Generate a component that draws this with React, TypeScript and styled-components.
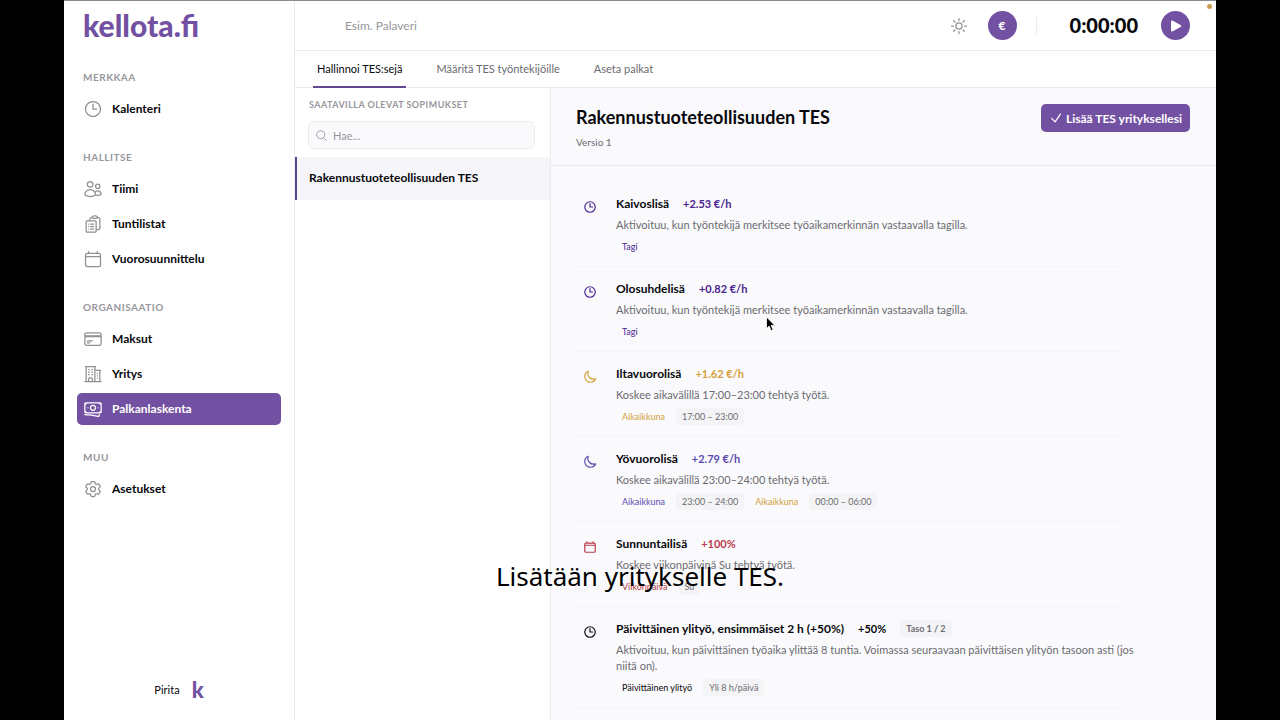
import React from 'react';
import styled, { createGlobalStyle } from 'styled-components';
import type { IconType } from 'react-icons';
import {
  HiOutlineBanknotes,
  HiOutlineBuildingOffice2,
  HiOutlineCalendar,
  HiOutlineCheck,
  HiOutlineClipboardDocumentList,
  HiOutlineClock,
  HiOutlineCog6Tooth,
  HiOutlineCreditCard,
  HiOutlineMagnifyingGlass,
  HiOutlineMoon,
  HiOutlineSun,
  HiOutlineUsers,
  HiPlay,
} from 'react-icons/hi2';

const color = {
  brand: '#7351a2',
  ink: '#08080c',
  muted: '#6b6b70',
  faint: '#97979c',
  line: '#ebebee',
  panel: '#fafafc',
  violet: '#4a2391',
  indigo: '#5a4ab0',
  amber: '#d5a03c',
  red: '#b83a4b',
};

const GlobalStyle = createGlobalStyle`
  *, *::before, *::after { box-sizing: border-box; }
  body { margin: 0; background: #000; }
  body, button, input { font-family: Lato, "Liberation Sans", sans-serif; }
  h1, h2, h3, p, ul { margin: 0; padding: 0; }
  ul { list-style: none; }
`;

const Stage = styled.div`
  position: relative;
  height: 100vh;
  padding: 0 5%;
  overflow: hidden;
`;

const Shell = styled.div`
  display: flex;
  height: 100%;
  background: #fff;
  border-top: 1px solid #8c8a8e;
  color: ${color.ink};
`;

const Sidebar = styled.aside`
  display: flex;
  flex-direction: column;
  flex: none;
  width: 231px;
  padding: 6px 13px 18px;
  border-right: 1px solid ${color.line};
`;

const Wordmark = styled.a`
  padding-left: 6px;
  margin-bottom: 26px;
  font-size: 30px;
  line-height: 36px;
  font-weight: 900;
  color: ${color.brand};
  text-decoration: none;
`;

const NavSection = styled.section`
  margin-bottom: 24px;
`;

const NavHeading = styled.h2`
  padding-left: 6px;
  margin-bottom: 8px;
  font-size: 10px;
  line-height: 16px;
  font-weight: 700;
  letter-spacing: 0.05em;
  text-transform: uppercase;
  color: ${color.faint};
`;

const NavList = styled.ul`
  display: grid;
  gap: 3px;
`;

const NavLink = styled.a<{ $active?: boolean }>`
  display: flex;
  align-items: center;
  gap: 9px;
  height: 32px;
  padding-left: 6px;
  border-radius: 5px;
  font-size: 12px;
  line-height: 16px;
  font-weight: 700;
  text-decoration: none;
  color: ${(p) => (p.$active ? '#fff' : color.ink)};
  background: ${(p) => (p.$active ? color.brand : 'transparent')};

  svg {
    width: 20px;
    height: 20px;
    color: ${(p) => (p.$active ? '#fff' : '#8f8f94')};
  }
`;

const Account = styled.footer`
  display: flex;
  align-items: center;
  justify-content: center;
  gap: 12px;
  margin-top: auto;
  font-size: 11px;
  line-height: 24px;
`;

const Monogram = styled.span`
  font-size: 22px;
  font-weight: 900;
  color: ${color.brand};
`;

const Main = styled.main`
  display: flex;
  flex-direction: column;
  flex: 1;
  min-width: 0;
`;

const TopBar = styled.header`
  display: flex;
  align-items: center;
  height: 50px;
  flex: none;
  padding: 0 26px 0 50px;
  border-bottom: 1px solid ${color.line};
`;

const TaskInput = styled.input`
  flex: 1;
  min-width: 0;
  padding: 0;
  border: 0;
  outline: 0;
  font-size: 12px;
  background: transparent;

  &::placeholder { color: ${color.faint}; opacity: 1; }
`;

const ThemeButton = styled.button`
  display: flex;
  padding: 0;
  margin-right: 19px;
  border: 0;
  background: none;
  color: #8f8f94;

  svg { width: 20px; height: 20px; }
`;

const RoundButton = styled.button`
  display: flex;
  align-items: center;
  justify-content: center;
  width: 29px;
  height: 29px;
  padding: 0;
  border: 0;
  border-radius: 50%;
  font-size: 12px;
  font-weight: 900;
  color: #fff;
  background: ${color.brand};

  svg { width: 16px; height: 16px; }
`;

const Divider = styled.span`
  width: 1px;
  height: 18px;
  margin: 0 33px 0 19px;
  background: ${color.line};
`;

const Timer = styled.time`
  margin-right: 23px;
  font-size: 20px;
  line-height: 26px;
  padding-bottom: 2px;
  font-weight: 900;
`;

const Tabs = styled.nav`
  display: flex;
  flex: none;
  gap: 26px;
  height: 37px;
  padding-left: 18px;
  border-bottom: 1px solid ${color.line};
`;

const Tab = styled.a<{ $active?: boolean }>`
  height: 37px;
  padding: 0 4px;
  border-bottom: 2px solid ${(p) => (p.$active ? '#62488f' : 'transparent')};
  font-size: 11px;
  line-height: 36px;
  text-decoration: none;
  color: ${(p) => (p.$active ? color.ink : color.muted)};
`;

const Columns = styled.div`
  display: flex;
  flex: 1;
  min-height: 0;
`;

const AgreementPane = styled.section`
  flex: none;
  width: 256px;
  padding-top: 9px;
  border-right: 1px solid ${color.line};
`;

const PaneHeading = styled.h2`
  padding-left: 14px;
  margin-bottom: 8px;
  font-size: 9px;
  line-height: 16px;
  font-weight: 700;
  letter-spacing: 0.05em;
  text-transform: uppercase;
  color: ${color.faint};
`;

const SearchField = styled.label`
  display: flex;
  align-items: center;
  gap: 5px;
  height: 28px;
  margin: 0 15px 8px 13px;
  padding: 0 6px;
  border: 1px solid ${color.line};
  border-radius: 6px;
  background: ${color.panel};

  svg { flex: none; width: 13px; height: 13px; color: #8f8f94; }
`;

const SearchInput = styled.input`
  flex: 1;
  min-width: 0;
  padding: 0;
  border: 0;
  outline: 0;
  font-size: 11px;
  background: transparent;

  &::placeholder { color: ${color.faint}; opacity: 1; }
`;

const AgreementButton = styled.button`
  display: block;
  width: 100%;
  height: 43px;
  padding: 0 0 3px 12px;
  border: 0;
  border-left: 2px solid #5b4788;
  text-align: left;
  font-size: 12px;
  font-weight: 700;
  color: ${color.ink};
  background: #f6f5fa;
`;

const Detail = styled.section`
  flex: 1;
  min-width: 0;
  background: ${color.panel};
`;

const DetailHeader = styled.header`
  display: flex;
  align-items: flex-start;
  justify-content: space-between;
  height: 78px;
  padding: 16px 26px 0 25px;
  border-bottom: 1px solid ${color.line};
`;

const DetailTitle = styled.h1`
  margin-bottom: 4px;
  font-size: 18px;
  line-height: 26px;
  font-weight: 700;
`;

const Version = styled.p`
  font-size: 10px;
  line-height: 16px;
  color: ${color.muted};
`;

const PrimaryButton = styled.button`
  display: flex;
  align-items: center;
  gap: 3px;
  height: 28px;
  padding: 0 8px;
  border: 0;
  border-radius: 5px;
  font-size: 12px;
  font-weight: 700;
  color: #fff;
  background: ${color.brand};

  svg { width: 14px; height: 14px; stroke-width: 2; }
`;

const RuleList = styled.ul`
  max-width: 570px;
  padding: 16px 0 0 25px;
`;

const Rule = styled.li`
  display: flex;
  gap: 19px;
  padding: 13px 0 11px 7px;
  border-bottom: 1px solid #f5f5f8;
`;

const RuleIcon = styled.span<{ $tone: string }>`
  flex: none;
  padding-top: 5px;
  color: ${(p) => p.$tone};

  svg { display: block; width: 14px; height: 14px; stroke-width: 2; }
`;

const RuleBody = styled.div`
  display: grid;
  gap: 5px;
  min-width: 0;
  margin-right: -20px;
`;

const RuleTop = styled.div`
  display: flex;
  align-items: center;
  gap: 14px;
  height: 17px;
`;

const RuleName = styled.h3`
  font-size: 12px;
  font-weight: 700;
`;

const Amount = styled.span<{ $tone: string }>`
  font-size: 11px;
  font-weight: 700;
  color: ${(p) => p.$tone};
`;

const RuleText = styled.p`
  font-size: 11px;
  line-height: 16px;
  color: ${color.muted};
`;

const Chips = styled.div`
  display: flex;
  gap: 5px;
`;

const Chip = styled.span<{ $tone?: string; $strong?: boolean }>`
  padding: 0 6px;
  border-radius: 4px;
  font-size: 9px;
  line-height: 17px;
  font-weight: ${(p) => (p.$strong ? 700 : 400)};
  color: ${(p) => p.$tone ?? color.muted};
  background: ${(p) => (p.$tone ? 'transparent' : '#f4f4f6')};
`;

const Caption = styled.p`
  position: absolute;
  left: 0;
  right: 0;
  bottom: 127px;
  text-align: center;
  font-family: "Noto Sans", sans-serif;
  font-size: 26px;
  line-height: 34px;
  color: #000;
`;

const Pointer = styled.svg`
  position: absolute;
  left: 765px;
  top: 316px;
  width: 11px;
  height: 16px;
`;

const RecordingDot = styled.span`
  position: absolute;
  top: 4px;
  right: calc(5% + 4px);
  width: 5px;
  height: 5px;
  border-radius: 50%;
  background: #c99f4c;
`;

type NavEntry = { label: string; icon: IconType; active?: boolean };

const navigation: { title: string; items: NavEntry[] }[] = [
  { title: 'Merkkaa', items: [{ label: 'Kalenteri', icon: HiOutlineClock }] },
  {
    title: 'Hallitse',
    items: [
      { label: 'Tiimi', icon: HiOutlineUsers },
      { label: 'Tuntilistat', icon: HiOutlineClipboardDocumentList },
      { label: 'Vuorosuunnittelu', icon: HiOutlineCalendar },
    ],
  },
  {
    title: 'Organisaatio',
    items: [
      { label: 'Maksut', icon: HiOutlineCreditCard },
      { label: 'Yritys', icon: HiOutlineBuildingOffice2 },
      { label: 'Palkanlaskenta', icon: HiOutlineBanknotes, active: true },
    ],
  },
  { title: 'Muu', items: [{ label: 'Asetukset', icon: HiOutlineCog6Tooth }] },
];

type ChipData = { label: string; tone?: string };

type RuleData = {
  name: string;
  amount: string;
  tone: string;
  icon: IconType;
  text: string;
  level?: string;
  chips: ChipData[];
};

const tagText = 'Aktivoituu, kun työntekijä merkitsee työaikamerkinnän vastaavalla tagilla.';

const rules: RuleData[] = [
  {
    name: 'Kaivoslisä',
    amount: '+2.53 €/h',
    tone: color.violet,
    icon: HiOutlineClock,
    text: tagText,
    chips: [{ label: 'Tagi', tone: color.violet }],
  },
  {
    name: 'Olosuhdelisä',
    amount: '+0.82 €/h',
    tone: color.violet,
    icon: HiOutlineClock,
    text: tagText,
    chips: [{ label: 'Tagi', tone: color.violet }],
  },
  {
    name: 'Iltavuorolisä',
    amount: '+1.62 €/h',
    tone: color.amber,
    icon: HiOutlineMoon,
    text: 'Koskee aikavälillä 17:00–23:00 tehtyä työtä.',
    chips: [{ label: 'Aikaikkuna', tone: color.amber }, { label: '17:00 – 23:00' }],
  },
  {
    name: 'Yövuorolisä',
    amount: '+2.79 €/h',
    tone: color.indigo,
    icon: HiOutlineMoon,
    text: 'Koskee aikavälillä 23:00–24:00 tehtyä työtä.',
    chips: [
      { label: 'Aikaikkuna', tone: color.indigo },
      { label: '23:00 – 24:00' },
      { label: 'Aikaikkuna', tone: color.amber },
      { label: '00:00 – 06:00' },
    ],
  },
  {
    name: 'Sunnuntailisä',
    amount: '+100%',
    tone: color.red,
    icon: HiOutlineCalendar,
    text: 'Koskee viikonpäivinä Su tehtyä työtä.',
    chips: [{ label: 'Viikonpäivä', tone: color.red }, { label: 'Su' }],
  },
  {
    name: 'Päivittäinen ylityö, ensimmäiset 2 h (+50%)',
    amount: '+50%',
    tone: color.ink,
    icon: HiOutlineClock,
    text: 'Aktivoituu, kun päivittäinen työaika ylittää 8 tuntia. Voimassa seuraavaan päivittäisen ylityön tasoon asti (jos niitä on).',
    level: 'Taso 1 / 2',
    chips: [{ label: 'Päivittäinen ylityö', tone: color.ink }, { label: 'Yli 8 h/päivä' }],
  },
];

function RuleRow({ rule }: { rule: RuleData }) {
  const Icon = rule.icon;
  return (
    <Rule>
      <RuleIcon $tone={rule.tone}>
        <Icon />
      </RuleIcon>
      <RuleBody>
        <RuleTop>
          <RuleName>{rule.name}</RuleName>
          <Amount $tone={rule.tone}>{rule.amount}</Amount>
          {rule.level && <Chip $strong>{rule.level}</Chip>}
        </RuleTop>
        <RuleText>{rule.text}</RuleText>
        <Chips>
          {rule.chips.map((chip, i) => (
            <Chip key={i} $tone={chip.tone}>
              {chip.label}
            </Chip>
          ))}
        </Chips>
      </RuleBody>
    </Rule>
  );
}

export default function App() {
  return (
    <Stage>
      <GlobalStyle />
      <Shell>
        <Sidebar>
          <Wordmark href="#">kellota.fi</Wordmark>
          <nav>
            {navigation.map((section) => (
              <NavSection key={section.title}>
                <NavHeading>{section.title}</NavHeading>
                <NavList>
                  {section.items.map(({ label, icon: Icon, active }) => (
                    <li key={label}>
                      <NavLink href="#" $active={active}>
                        <Icon />
                        {label}
                      </NavLink>
                    </li>
                  ))}
                </NavList>
              </NavSection>
            ))}
          </nav>
          <Account>
            Pirita
            <Monogram>k</Monogram>
          </Account>
        </Sidebar>
        <Main>
          <TopBar>
            <TaskInput aria-label="Tehtävä" placeholder="Esim. Palaveri" />
            <ThemeButton aria-label="Teema">
              <HiOutlineSun />
            </ThemeButton>
            <RoundButton>€</RoundButton>
            <Divider />
            <Timer>0:00:00</Timer>
            <RoundButton aria-label="Käynnistä">
              <HiPlay />
            </RoundButton>
          </TopBar>
          <Tabs>
            <Tab href="#" $active>
              Hallinnoi TES:sejä
            </Tab>
            <Tab href="#">Määritä TES työntekijöille</Tab>
            <Tab href="#">Aseta palkat</Tab>
          </Tabs>
          <Columns>
            <AgreementPane>
              <PaneHeading>Saatavilla olevat sopimukset</PaneHeading>
              <SearchField>
                <HiOutlineMagnifyingGlass />
                <SearchInput aria-label="Hae sopimuksia" placeholder="Hae..." />
              </SearchField>
              <AgreementButton>Rakennustuoteteollisuuden TES</AgreementButton>
            </AgreementPane>
            <Detail>
              <DetailHeader>
                <div>
                  <DetailTitle>Rakennustuoteteollisuuden TES</DetailTitle>
                  <Version>Versio 1</Version>
                </div>
                <PrimaryButton>
                  <HiOutlineCheck />
                  Lisää TES yrityksellesi
                </PrimaryButton>
              </DetailHeader>
              <RuleList>
                {rules.map((rule) => (
                  <RuleRow key={rule.name} rule={rule} />
                ))}
              </RuleList>
            </Detail>
          </Columns>
        </Main>
      </Shell>
      <RecordingDot />
      <Pointer viewBox="0 0 11 16" aria-hidden="true">
        <path
          d="M1.5 1v11.6l2.7-2.5 1.9 4.6 2-.9-1.9-4.4h3.6z"
          fill="#000"
          stroke="#fff"
          strokeWidth="0.8"
        />
      </Pointer>
      <Caption>Lisätään yritykselle TES.</Caption>
    </Stage>
  );
}
